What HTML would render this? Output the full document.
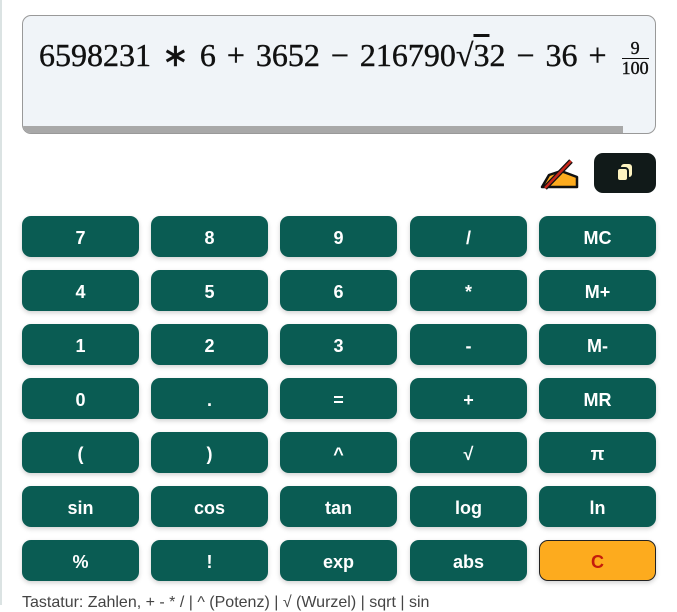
<!DOCTYPE html>
<html><head><meta charset="utf-8"><style>
html,body{margin:0;padding:0;width:677px;height:605px;overflow:hidden;background:#fff;font-family:"Liberation Sans",sans-serif}
.edge{position:absolute;left:0;top:0;width:2px;height:605px;background:#dbe3e3}
.disp{position:absolute;left:22px;top:15px;width:632px;height:117px;background:#f0f4f8;border:1px solid #999;border-radius:9px;overflow:hidden}
.math{position:absolute;left:16px;top:20px;font-family:"Liberation Serif",serif;font-size:32px;color:#111;white-space:nowrap;-webkit-text-stroke:0.4px #111;word-spacing:3px}
.frac{display:inline-block;vertical-align:middle;text-align:center;font-size:18px;line-height:19px;margin-left:4px;word-spacing:0}
.frac span{display:block}
.frac .n{border-bottom:1px solid #111}
.sb{position:absolute;left:0;bottom:0;width:600px;height:7px;background:#a8a8a8}
.copy{position:absolute;left:594px;top:153px;width:62px;height:40px;background:#111a19;border-radius:9px}
.btn{position:absolute;width:117px;height:41px;padding-top:3px;box-sizing:border-box;background:#0a5c53;border-radius:9px;color:#fff;font-weight:bold;font-size:18px;display:flex;align-items:center;justify-content:center;box-shadow:0 2px 5px rgba(0,0,0,.18)}
.c{background:#fdab1e;color:#c41c0c;border:1px solid #222}
.foot{position:absolute;left:22px;top:594px;font-size:16px;color:#444;white-space:nowrap}
</style></head><body>
<div class="edge"></div>
<div class="disp"><div class="math">6598231 ∗ 6 + 3652 − 216790√<span style="text-decoration:overline">3</span>2 − 36 + <span class="frac"><span class="n">9</span><span>100</span></span></div><div class="sb"></div></div>
<svg style="position:absolute;left:539px;top:157px" width="40" height="34" viewBox="0 0 40 34">
<path d="M3 30 L10 18 L22 14 L38 20 L38 30 Z" fill="#fdab1e" stroke="#111" stroke-width="2.5" stroke-linejoin="round"/>
<line x1="6" y1="31" x2="32" y2="4" stroke="#111" stroke-width="5"/>
<line x1="6" y1="31" x2="32" y2="4" stroke="#c8261a" stroke-width="2.5"/>
</svg>
<div class="copy"><svg style="position:absolute;left:21px;top:10px" width="20" height="20" viewBox="0 0 20 20"><rect x="6" y="1" width="11" height="13" rx="3" fill="#fdf3c0"/><rect x="2" y="5" width="11" height="13" rx="3" fill="#fdf3c0" stroke="#111a19" stroke-width="2"/></svg></div>
<div class="btn" style="left:22px;top:216px">7</div><div class="btn" style="left:151px;top:216px">8</div><div class="btn" style="left:280px;top:216px">9</div><div class="btn" style="left:410px;top:216px">/</div><div class="btn" style="left:539px;top:216px">MC</div>
<div class="btn" style="left:22px;top:270px">4</div><div class="btn" style="left:151px;top:270px">5</div><div class="btn" style="left:280px;top:270px">6</div><div class="btn" style="left:410px;top:270px">*</div><div class="btn" style="left:539px;top:270px">M+</div>
<div class="btn" style="left:22px;top:324px">1</div><div class="btn" style="left:151px;top:324px">2</div><div class="btn" style="left:280px;top:324px">3</div><div class="btn" style="left:410px;top:324px">-</div><div class="btn" style="left:539px;top:324px">M-</div>
<div class="btn" style="left:22px;top:378px">0</div><div class="btn" style="left:151px;top:378px">.</div><div class="btn" style="left:280px;top:378px">=</div><div class="btn" style="left:410px;top:378px">+</div><div class="btn" style="left:539px;top:378px">MR</div>
<div class="btn" style="left:22px;top:432px">(</div><div class="btn" style="left:151px;top:432px">)</div><div class="btn" style="left:280px;top:432px">^</div><div class="btn" style="left:410px;top:432px">√</div><div class="btn" style="left:539px;top:432px">π</div>
<div class="btn" style="left:22px;top:486px">sin</div><div class="btn" style="left:151px;top:486px">cos</div><div class="btn" style="left:280px;top:486px">tan</div><div class="btn" style="left:410px;top:486px">log</div><div class="btn" style="left:539px;top:486px">ln</div>
<div class="btn" style="left:22px;top:540px">%</div><div class="btn" style="left:151px;top:540px">!</div><div class="btn" style="left:280px;top:540px">exp</div><div class="btn" style="left:410px;top:540px">abs</div><div class="btn c" style="left:539px;top:540px">C</div>
<div class="foot">Tastatur: Zahlen, + - * / | ^ (Potenz) | √ (Wurzel) | sqrt | sin</div>
</body></html>
